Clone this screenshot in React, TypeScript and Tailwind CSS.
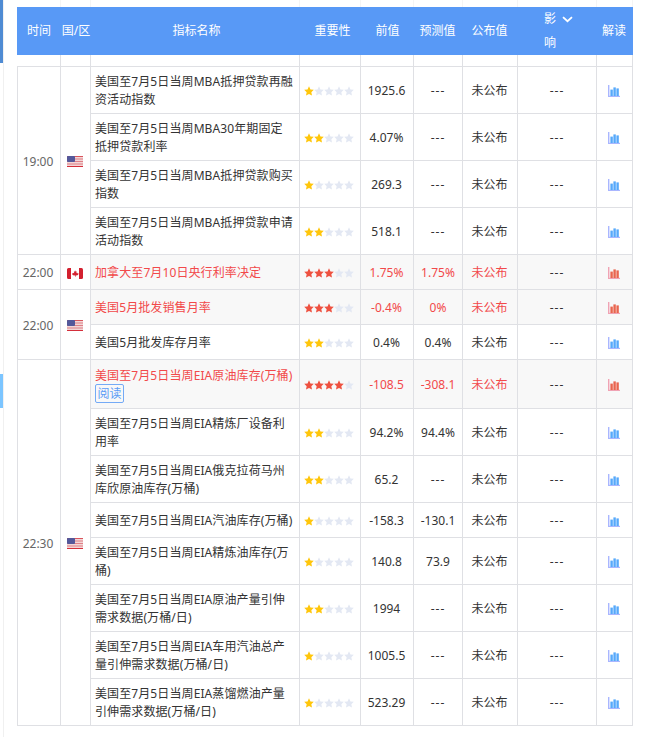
const font = { fontFamily: '"Noto Sans", "Noto Sans CJK SC", sans-serif' };

type Row = { name: string; stars: number; prev: string; fc: string; red?: boolean; h: string; read?: boolean };

const groups: { time: string; flag: 'us' | 'ca'; rows: Row[] }[] = [
  {
    time: '19:00',
    flag: 'us',
    rows: [
      { name: '美国至7月5日当周MBA抵押贷款再融\n资活动指数', stars: 1, prev: '1925.6', fc: '---', h: 'h-[47px]' },
      { name: '美国至7月5日当周MBA30年期固定\n抵押贷款利率', stars: 2, prev: '4.07%', fc: '---', h: 'h-[47px]' },
      { name: '美国至7月5日当周MBA抵押贷款购买\n指数', stars: 1, prev: '269.3', fc: '---', h: 'h-[47px]' },
      { name: '美国至7月5日当周MBA抵押贷款申请\n活动指数', stars: 2, prev: '518.1', fc: '---', h: 'h-[47px]' },
    ],
  },
  {
    time: '22:00',
    flag: 'ca',
    rows: [{ name: '加拿大至7月10日央行利率决定', stars: 3, prev: '1.75%', fc: '1.75%', red: true, h: 'h-[35px]' }],
  },
  {
    time: '22:00',
    flag: 'us',
    rows: [
      { name: '美国5月批发销售月率', stars: 3, prev: '-0.4%', fc: '0%', red: true, h: 'h-[35px]' },
      { name: '美国5月批发库存月率', stars: 2, prev: '0.4%', fc: '0.4%', h: 'h-[35px]' },
    ],
  },
  {
    time: '22:30',
    flag: 'us',
    rows: [
      { name: '美国至7月5日当周EIA原油库存(万桶)', stars: 4, prev: '-108.5', fc: '-308.1', red: true, h: 'h-[49px]', read: true },
      { name: '美国至7月5日当周EIA精炼厂设备利\n用率', stars: 2, prev: '94.2%', fc: '94.4%', h: 'h-[47px]' },
      { name: '美国至7月5日当周EIA俄克拉荷马州\n库欣原油库存(万桶)', stars: 2, prev: '65.2', fc: '---', h: 'h-[47px]' },
      { name: '美国至7月5日当周EIA汽油库存(万桶)', stars: 1, prev: '-158.3', fc: '-130.1', h: 'h-[35px]' },
      { name: '美国至7月5日当周EIA精炼油库存(万\n桶)', stars: 1, prev: '140.8', fc: '73.9', h: 'h-[47px]' },
      { name: '美国至7月5日当周EIA原油产量引伸\n需求数据(万桶/日)', stars: 2, prev: '1994', fc: '---', h: 'h-[47px]' },
      { name: '美国至7月5日当周EIA车用汽油总产\n量引伸需求数据(万桶/日)', stars: 1, prev: '1005.5', fc: '---', h: 'h-[47px]' },
      { name: '美国至7月5日当周EIA蒸馏燃油产量\n引伸需求数据(万桶/日)', stars: 1, prev: '523.29', fc: '---', h: 'h-[47px]' },
    ],
  },
];

function Stars({ n, red }: { n: number; red?: boolean }) {
  return (
    <div className="flex justify-center pr-[2px]">
      {[0, 1, 2, 3, 4].map((i) => (
        <svg key={i} width="10" height="10" viewBox="0 0 24 24">
          <path
            d="M12 0.8l3.5 7.4 8 1-5.9 5.6 1.6 8.1L12 18.900l-7.200 4 1.600-8.100L0.500 9.200l8-1z"
            fill={i < n ? (red ? '#ee5140' : '#ffc60b') : '#e3e8f3'}
          />
        </svg>
      ))}
    </div>
  );
}

function Bars({ red }: { red?: boolean }) {
  const axis = red ? '#f0a3b4' : '#a9b6ff';
  const bar = red ? '#e9654f' : '#56a9fb';
  return (
    <svg width="12" height="12" viewBox="0 0 12 12" className="block ml-[11px]">
      <rect x="0" y="0" width="1.4" height="12" fill={axis} />
      <rect x="0" y="10.8" width="12" height="1.2" fill={axis} />
      <rect x="2.4" y="4.600" width="2.400" height="6.400" fill={bar} />
      <rect x="5.400" y="2.400" width="2.400" height="8.600" fill={bar} />
      <rect x="8.400" y="3.400" width="2.400" height="7.600" fill={bar} />
    </svg>
  );
}

function Flag({ kind }: { kind: 'us' | 'ca' }) {
  if (kind === 'ca') {
    return (
      <svg width="16" height="11" viewBox="0 0 16 11" className="block ml-[6px]">
        <rect width="16" height="11" rx="1.5" fill="#fff" />
        <path d="M1.500 0H4v11H1.500A1.500 1.500 0 0 1 0 9.500v-8A1.500 1.500 0 0 1 1.500 0z" fill="#d3202f" />
        <path d="M12 0h2.500A1.500 1.500 0 0 1 16 1.500v8a1.500 1.500 0 0 1-1.500 1.500H12z" fill="#d3202f" />
        <path d="M8 2.200l.9 1.500.8-.4-.3 2 .9-.6.3.8 1-.2-.3 1.200-.8.800-1.900.2v1.200h-.6V7.500l-1.900-.2-.8-.8-.3-1.200 1 .2.300-.8.900.6-.3-2 .8.400z" fill="#d3202f" />
      </svg>
    );
  }
  return (
    <svg width="16" height="11" viewBox="0 0 16 11" className="block ml-[6px]">
      <rect width="16" height="11" rx="1.500" fill="#f3d6d6" />
      <rect y="0" width="16" height="1" fill="#d9545c" />
      <rect y="2.500" width="16" height="1" fill="#de8088" />
      <rect y="5" width="16" height="1" fill="#de8088" />
      <rect y="7.500" width="16" height="1" fill="#de8088" />
      <rect y="10" width="16" height="1" fill="#d42f3b" />
      <rect width="8" height="6" rx="1" fill="#54589a" />
    </svg>
  );
}

const cell = 'border-r border-b border-[#dfe0e4] text-center align-middle px-0 pb-0 pt-[2px]';

export default function App() {
  return (
    <div className="flex w-[646px] h-[737px] bg-white overflow-hidden text-[12px] leading-[18px] text-[#333]" style={font}>
      <div className="w-[3px] shrink-0">
        <div className="h-[63px] bg-[#4f8bd3]" />
        <div className="h-[34px] mt-[311px] bg-[#7cc5ff]" />
      </div>
      <div className="w-px shrink-0 bg-[#f0f0f0]" />
      <div className="pl-[13px]">
        <table className="table-fixed border-separate border-spacing-0 w-[616px]">
          <colgroup>
            <col className="w-[44px]" />
            <col className="w-[30px]" />
            <col className="w-[209px]" />
            <col className="w-[61px]" />
            <col className="w-[53px]" />
            <col className="w-[49px]" />
            <col className="w-[55px]" />
            <col className="w-[79px]" />
            <col className="w-[36px]" />
          </colgroup>
          <thead>
            <tr className="h-[7px]">
              {Array.from({ length: 9 }).map((_, i) => (
                <td key={i} className="border-r border-[#f5f5f5] p-0 h-[7px]" />
              ))}
            </tr>
            <tr className="h-[48px] bg-[#5899f6] text-white">
              <th className="font-normal p-0 text-center">时间</th>
              <th className="font-normal p-0 text-center">国/区</th>
              <th className="font-normal p-0 text-center pl-[2px]">指标名称</th>
              <th className="font-normal p-0 text-center pl-[4px]">重要性</th>
              <th className="font-normal p-0 text-center">前值</th>
              <th className="font-normal p-0 text-center pr-[2px]">预测值</th>
              <th className="font-normal p-0 text-center pr-[2px]">公布值</th>
              <th className="font-normal p-0 text-left pl-[26px] leading-[24px]">
                <div className="flex items-center gap-[6px]">
                  <span>影</span>
                  <svg width="11" height="7" viewBox="0 0 11 7" fill="none">
                    <path d="M1 1.200l4.500 4 4.500-4" stroke="#fff" strokeWidth="1.800" />
                  </svg>
                </div>
                <div>响</div>
              </th>
              <th className="font-normal p-0 text-center pr-[2px]">解读</th>
            </tr>
          </thead>
          <tbody>
            <tr className="h-[12px]">
              {Array.from({ length: 9 }).map((_, i) => (
                <td key={i} className="border-r border-b border-[#dfe0e4] p-0 h-[12px]" />
              ))}
            </tr>
            {groups.map((g, gi) =>
              g.rows.map((r, ri) => {
                const tone = r.red ? 'text-[#f2494a]' : 'text-[#333333]';
                return (
                  <tr key={`${gi}-${ri}`} className={r.red ? 'bg-[#f8f8f8]' : 'bg-white'}>
                    {ri === 0 && (
                      <td rowSpan={g.rows.length} className={`${cell} border-l bg-white text-[#666666] pr-[2px]`}>
                        {g.time}
                      </td>
                    )}
                    {ri === 0 && (
                      <td rowSpan={g.rows.length} className={`${cell} bg-white`}>
                        <Flag kind={g.flag} />
                      </td>
                    )}
                    <td className={`${cell} ${r.h} ${tone} !text-left pl-[4px] whitespace-pre tracking-[0.1px]`}>
                      {r.name}
                      {r.read && (
                        <div className="-mt-[1px]">
                          <span className="inline-block h-[19px] w-[29px] border border-[#74aaf6] rounded-[2px] text-center text-[#5b9cf6] leading-[17px]">
                            阅读
                          </span>
                        </div>
                      )}
                    </td>
                    <td className={cell}>
                      <Stars n={r.stars} red={r.red} />
                    </td>
                    <td className={`${cell} ${tone} pr-[1px]`}>{r.prev}</td>
                    <td className={`${cell} ${tone} ${r.fc === '---' ? 'tracking-[1px]' : ''}`}>{r.fc}</td>
                    <td className={`${cell} ${tone} pr-[1px]`}>未公布</td>
                    <td className={`${cell} tracking-[1px]`}>---</td>
                    <td className={cell}>
                      <Bars red={r.red} />
                    </td>
                  </tr>
                );
              })
            )}
          </tbody>
        </table>
      </div>
    </div>
  );
}
